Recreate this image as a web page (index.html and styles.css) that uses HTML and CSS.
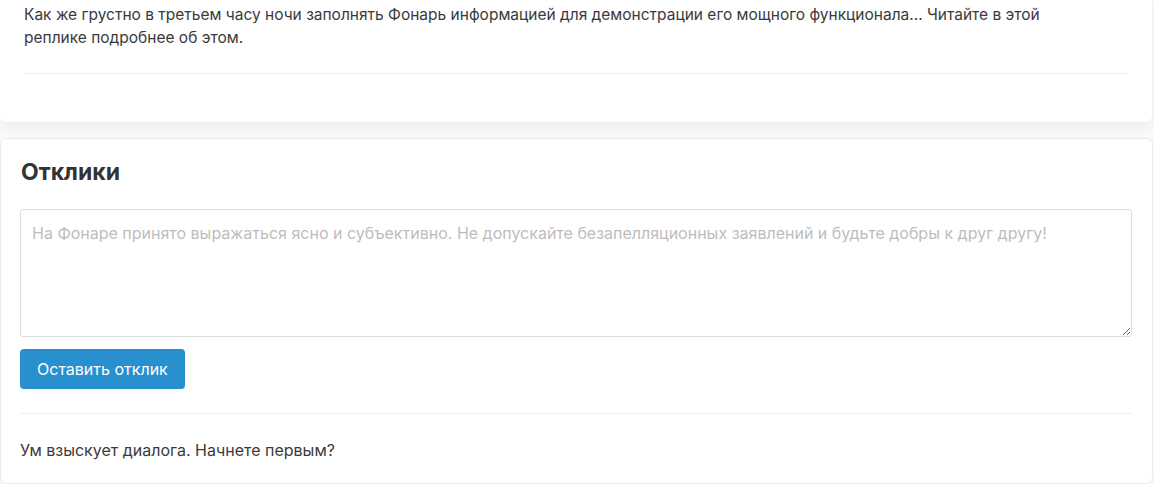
FILE: index.html
```html
<!DOCTYPE html>
<html lang="ru">
<head>
<meta charset="utf-8">
<link rel="stylesheet" href="styles.css">
</head>
<body>
<div class="page">
  <article class="card post">
    <p class="post-text">Как же грустно в третьем часу ночи заполнять Фонарь информацией для демонстрации его мощного функционала... Читайте в этой реплике подробнее об этом.</p>
    <hr class="sep post-sep">
  </article>
  <section class="card replies">
    <h2 class="replies-title">Отклики</h2>
    <textarea class="reply-input" placeholder="На Фонаре принято выражаться ясно и субъективно. Не допускайте безапелляционных заявлений и будьте добры к друг другу!"></textarea>
    <button class="btn" type="button">Оставить отклик</button>
    <hr class="sep replies-sep">
    <p class="empty">Ум взыскует диалога. Начнете первым?</p>
  </section>
</div>
</body>
</html>
```
FILE: styles.css
```css
* { box-sizing: border-box; }
html, body { margin: 0; padding: 0; background: #fafafa; }
body {
  font-family: Inter, "Noto Sans", sans-serif;
  color: #3a3a3a;
  font-size: 16px;
  line-height: 24px;
}
.page {
  width: 1153px;
  display: flex;
  flex-direction: column;
  gap: 16px;
}
.card {
  background: #fff;
  border-radius: 6px;
}
.post {
  width: 1152px;
  padding: 3px 24px 48px;
  border-radius: 0 0 6px 6px;
  box-shadow: 0 4px 14px rgba(0,0,0,0.07);
}
.post-text { margin: 0; max-width: 1060px; font-size: 15.5px; line-height: 23px; }
.sep {
  border: 0;
  height: 1px;
  background: #efefef;
  margin: 0;
}
.post-sep { margin-top: 24px; }
.replies {
  width: 1153px;
  padding: 20px 19px 21px 20px;
  border: 1px solid #ebebeb;
  border-radius: 6px;
  display: flex;
  flex-direction: column;
  align-items: flex-start;
  box-shadow: 0 2px 8px rgba(0,0,0,0.03);
}
.replies-title {
  margin: 0 0 24px;
  font-size: 23px;
  line-height: 26px;
  font-weight: 700;
  color: #333;
}
.reply-input {
  width: 1112px;
  height: 128px;
  margin-left: -1px;
  border: 1px solid #ddd;
  border-radius: 3px;
  padding: 11px 11px;
  font-family: inherit;
  font-size: 16px;
  line-height: 24px;
  color: #333;
  resize: vertical;
  background: #fff;
  display: block;
}
.reply-input::placeholder { color: #bdbdbd; }
.btn {
  margin-top: 12px;
  margin-left: -1px;
  height: 40px;
  padding: 0 17px;
  border: 0;
  border-radius: 4px;
  background: #2890cf;
  color: #fff;
  font-family: inherit;
  font-size: 16px;
  line-height: 24px;
}
.replies-sep { margin-top: 24px; margin-left: -1px; width: 1112px; }
.empty { margin: 24px 0 0 -1px; }
```
